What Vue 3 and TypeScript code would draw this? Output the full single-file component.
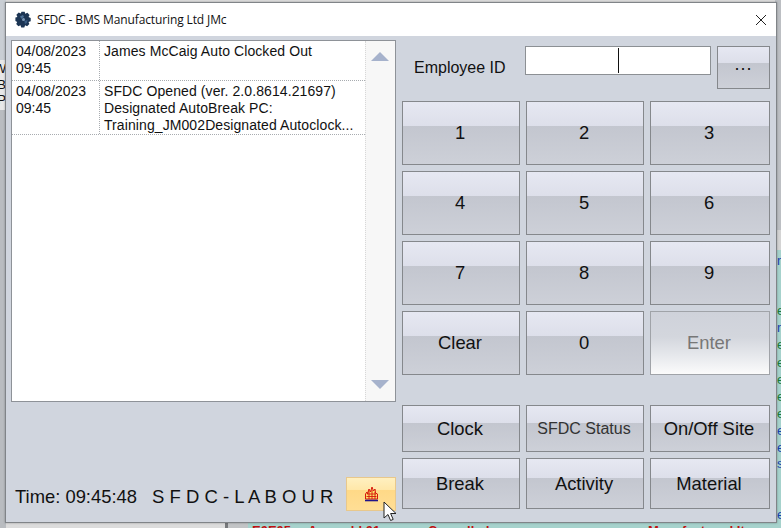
<script setup lang="ts">
interface Log { date: string; time: string; lines: string[] }
const logs: Log[] = [
  { date: '04/08/2023', time: '09:45', lines: ['James McCaig Auto Clocked Out'] },
  { date: '04/08/2023', time: '09:45', lines: ['SFDC Opened (ver. 2.0.8614.21697)', 'Designated AutoBreak PC:', 'Training_JM002Designated Autoclock...'] },
]
const keys = ['1', '2', '3', '4', '5', '6', '7', '8', '9', 'Clear', '0', 'Enter']
const peek = [
  { t: 'n', y: 253, c: '#1a3fb0' }, { t: 'e', y: 303, c: '#1a7a3a' }, { t: 'n', y: 320, c: '#1a3fb0' },
  { t: 'e', y: 337, c: '#1a7a3a' }, { t: 'e', y: 355, c: '#1a7a3a' }, { t: 'e', y: 372, c: '#1a7a3a' },
  { t: 'e', y: 389, c: '#1a7a3a' }, { t: 'e', y: 406, c: '#1a7a3a' }, { t: 'e', y: 423, c: '#1a3fb0' },
  { t: 'e', y: 440, c: '#1a3fb0' }, { t: 's', y: 456, c: '#1a3fb0' }, { t: 'e', y: 507, c: '#1a3fb0' },
]
</script>

<template>
  <div class="desktop">
    <div class="left-strip">
      <span class="peek-l pl1">W</span>
      <span class="peek-l pl2">B</span>
      <span class="peek-l pl3">P</span>
    </div>
    <div class="right-strip">
      <span v-for="(p, i) in peek" :key="i" class="peek-r" :style="{ top: p.y + 'px', color: p.c }">{{ p.t }}</span>
    </div>
    <div class="bottom-gap"></div>
    <div class="bottom-strip">
      <span class="b1">E0E05</span><span class="b2">Assembl 01</span><span class="b3">Cancelled</span><span class="b4">Manufactured It</span>
    </div>

    <div class="window">
      <header class="titlebar">
        <svg class="logo" width="17" height="17" viewBox="0 0 17 17">
          <path d="M6.5.8h3.2l.5 2 2.2-1 2.2 2.2-1.1 2 2.2.9v3.4l-2.2.6.9 2.2-2.3 2.2-2-1-.8 2.1H6.2l-.7-2.1-2.1.9-2.2-2.3 1-1.9-1.8-.9V6.6l2-.6-1-2.2 2.3-2.2 2 1z" fill="#1c3554"/>
          <path d="M5 5.5l3-1.5 1 2-2.6 1.8z" fill="#4d7197"/>
          <path d="M9.5 10l3-1-.6 3-2 1z" fill="#3a5c82"/>
          <circle cx="8.5" cy="8.5" r="1.5" fill="#7d99b8"/>
        </svg>
        <span class="title">SFDC - BMS Manufacturing Ltd JMc</span>
        <svg class="close" width="12" height="12" viewBox="0 0 12 12">
          <path d="M1 1l10 10M11 1L1 11" stroke="#222" stroke-width="1" fill="none"/>
        </svg>
      </header>

      <div class="body">
        <section class="left">
          <div class="list">
            <div class="rows">
              <div v-for="(l, i) in logs" :key="i" class="row">
                <div class="when"><div>{{ l.date }}</div><div>{{ l.time }}</div></div>
                <div class="what"><div v-for="(t, j) in l.lines" :key="j">{{ t }}</div></div>
              </div>
            </div>
            <div class="scroll">
              <span class="arrow up"></span>
              <span class="arrow down"></span>
            </div>
          </div>
          <div class="footer">
            <span class="clock">Time: 09:45:48</span>
            <span class="brand">S F D C - L A B O U R</span>
            <button class="fire">
              <svg width="15" height="16" viewBox="0 0 15 16">
                <path d="M1.5 13V8l1.5-2 .5 2L5 3l1.5 3L8 1l1.5 4L11 3l.5 4L13.5 8v5z" fill="#fbe26a" stroke="#d8160c" stroke-width="1"/>
                <path d="M3 8h9M2.5 10.5h10M5 5v8M8 4v9M11 6v7" stroke="#d8160c" stroke-width=".9" fill="none"/>
                <path d="M1 14.5h13" stroke="#20148a" stroke-width="1.6"/>
              </svg>
            </button>
            <svg class="cursor" width="14" height="22" viewBox="0 0 14 22">
              <path d="M1 1v16l4-3.5 2.6 6 2.6-1.1-2.6-5.900h5.4z" fill="#fff" stroke="#222" stroke-width="1"/>
            </svg>
          </div>
        </section>

        <section class="right">
          <div class="idrow">
            <label class="idlabel">Employee ID</label>
            <div class="idinput"><span class="caret"></span></div>
            <button class="btn more">...</button>
          </div>
          <div class="keypad">
            <button v-for="k in keys" :key="k" class="btn" :class="{ enter: k === 'Enter' }">{{ k }}</button>
          </div>
          <div class="actions">
            <button class="btn">Clock</button>
            <button class="btn small">SFDC Status</button>
            <button class="btn">On/Off Site</button>
            <button class="btn">Break</button>
            <button class="btn">Activity</button>
            <button class="btn">Material</button>
          </div>
        </section>
      </div>
    </div>
  </div>
</template>

<style>
html, body { margin: 0; overflow: hidden; }
</style>

<style scoped>
.desktop {
  position: relative;
  width: 781px;
  height: 528px;
  overflow: hidden;
  background: #dcdcdc;
  font-family: "Liberation Sans", Arial, sans-serif;
  color: #111;
}
.left-strip {
  position: absolute; left: 0; top: 0; width: 6px; height: 528px;
  background: linear-gradient(#c9ced4 0, #c9ced4 60px, #e8e8e8 60px, #e8e8e8 110px, #b9bcc0 110px);
}
.peek-l { position: absolute; left: -6px; font-size: 13px; line-height: 15px; width: 12px; text-align: right; }
.pl1 { top: 61px; }
.pl2 { top: 77px; }
.pl3 { top: 92px; }
.right-strip {
  position: absolute; right: 0; top: 0; width: 6px; height: 528px;
  background: linear-gradient(#bcbfc3 0, #bcbfc3 230px, #d4d4d4 230px, #d4d4d4 250px, #a6d2cc 250px);
}
.peek-r { position: absolute; left: 2px; font-size: 13px; line-height: 15px; }
.bottom-gap {
  position: absolute; left: 225px; bottom: 0; width: 23px; height: 6px; box-sizing: border-box;
  border-left: 3px solid #77797c; background: #c2c4c6;
}
.bottom-strip {
  position: absolute; left: 248px; right: 0; bottom: 0; height: 5px;
  background: #a6d2cc; color: #c01010; font-size: 13px; font-weight: bold;
  display: flex; line-height: 15px; overflow: hidden;
}
.b1 { width: 56px; margin-left: 4px; }
.b2 { width: 120px; }
.b3 { width: 220px; }
.window {
  position: absolute; left: 5px; top: 2px; width: 772px; height: 521px;
  box-sizing: border-box;
  border: 1px solid #808488;
  background: #d0d5de;
  display: flex; flex-direction: column;
  box-shadow: 0 0 2px rgba(0,0,0,.3);
}
.titlebar {
  height: 33px; flex: none; background: #fff;
  display: flex; align-items: center; padding: 0 10px;
}
.logo { flex: none; margin-left: -1px; }
.title {
  margin-left: 5px; font-family: "Open Sans", "Noto Sans", sans-serif; font-size: 12px; letter-spacing: -.12px; color: #111; flex: 1;
}
.close { flex: none; margin-right: -1px; }
.body { flex: 1; display: flex; padding: 4px 5px 11px 5px; gap: 6px; min-height: 0; }
.left { width: 385px; display: flex; flex-direction: column; }
.list {
  height: 362px; box-sizing: border-box; background: #fff; border: 1px solid #8e9298;
  display: flex;
}
.rows { flex: 1; min-width: 0; }
.row {
  display: flex; border-bottom: 1px dotted #a8acb0;
  font-size: 14px; line-height: 17px; color: #111;
}
.when { width: 83px; padding: 2px 0 3px 4px; border-right: 1px dotted #a8acb0; flex: none; }
.what { padding: 2px 0 0 4px; flex: 1; white-space: nowrap; letter-spacing: .09px; }
.row:first-child { height: 39px; }
.row:nth-child(2) { height: 53px; }
.scroll {
  width: 30px; flex: none; background: #f7f7f7; border-left: 1px dotted #d8d8d8;
  display: flex; flex-direction: column; justify-content: space-between; align-items: center;
  padding: 11px 2px 12px 0; box-sizing: border-box;
}
.arrow { width: 0; height: 0; border-left: 9px solid transparent; border-right: 9px solid transparent; }
.up { border-bottom: 9px solid #a6b2cc; }
.down { border-top: 9px solid #a6b2cc; }
.footer { flex: 1; position: relative; display: flex; align-items: flex-end; padding-left: 4px; }
.clock { font-size: 18.4px; line-height: 22px; margin-bottom: 3px; white-space: nowrap; }
.brand { font-size: 18.5px; line-height: 22px; margin: 0 0 3px 15px; white-space: nowrap; }
.fire {
  position: absolute; right: 0; bottom: 0; width: 50px; height: 34px; padding: 0;
  border: 1px solid #e8c88c; box-sizing: border-box;
  background: linear-gradient(#fff0c0 0, #ffe7a8 38%, #ffd987 38%, #ffde95 100%);
  display: flex; align-items: center; justify-content: center;
}
.cursor { position: absolute; left: 372px; bottom: -12px; }
.right { flex: 1; display: flex; flex-direction: column; min-width: 0; }
.idrow { display: flex; height: 59px; align-items: flex-start; padding-top: 6px; box-sizing: border-box; }
.idlabel { font-size: 16px; margin: 13px 0 0 12px; width: 111px; line-height: 18px; white-space: nowrap; }
.idinput {
  width: 186px; height: 29px; box-sizing: border-box; background: #fff; border: 1px solid #8c9094;
  display: flex; justify-content: center; align-items: center;
}
.caret { width: 1px; height: 25px; background: #111; display: block; margin-left: 1px; }
.btn {
  box-sizing: border-box; margin: 0; border: 1px solid #85888c;
  padding: 0 2px 0 0;
  background: linear-gradient(#e6e8f2 0, #dddfea 38%, #c3c6cf 38%, #cdd0d8 100%);
  font-family: inherit; font-size: 18.4px; color: #111;
}
.more { width: 53px; height: 43px; margin-left: 6px; font-size: 18px; letter-spacing: 1px; padding: 0 0 6px 0; }
.keypad {
  display: grid; grid-template-columns: 118px 118px 120px; grid-auto-rows: 64px; column-gap: 6px; row-gap: 6px;
  margin-top: 2px;
}
.enter {
  background: linear-gradient(#cfd2da 0, #d3d6dd 40%, #e6e8ec 70%, #fbfbfb 100%);
  color: #777; border-color: #a0a3a8;
}
.actions {
  display: grid; grid-template-columns: 118px 118px 120px; grid-template-rows: 47px 51px; column-gap: 6px; row-gap: 6px;
  margin-top: 30px;
}
.small { font-size: 16px; color: #333; }
</style>
